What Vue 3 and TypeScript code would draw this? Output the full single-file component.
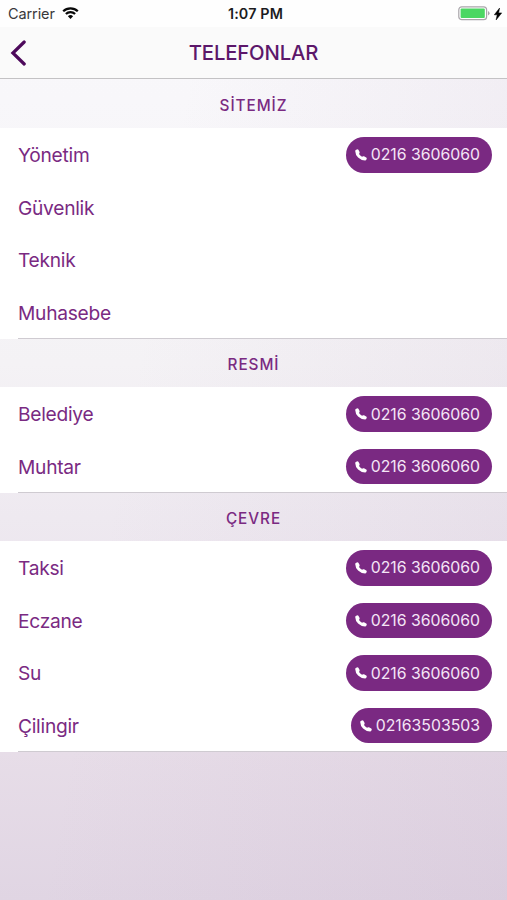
<script setup lang="ts">
interface Contact {
  name: string
  phone?: string
}

interface Section {
  title: string
  contacts: Contact[]
}

const sections: Section[] = [
  {
    title: 'SİTEMİZ',
    contacts: [
      { name: 'Yönetim', phone: '0216 3606060' },
      { name: 'Güvenlik' },
      { name: 'Teknik' },
      { name: 'Muhasebe' },
    ],
  },
  {
    title: 'RESMİ',
    contacts: [
      { name: 'Belediye', phone: '0216 3606060' },
      { name: 'Muhtar', phone: '0216 3606060' },
    ],
  },
  {
    title: 'ÇEVRE',
    contacts: [
      { name: 'Taksi', phone: '0216 3606060' },
      { name: 'Eczane', phone: '0216 3606060' },
      { name: 'Su', phone: '0216 3606060' },
      { name: 'Çilingir', phone: '02163503503' },
    ],
  },
]
</script>

<template>
  <div class="screen">
    <header class="top">
      <div class="status">
        <div class="status-left">
          <span class="carrier">Carrier</span>
          <svg class="wifi" viewBox="0 0 17 12" aria-hidden="true">
            <path d="M1.2 4.3 A10.4 10.4 0 0 1 15.8 4.3" />
            <path d="M3.9 7 A6.5 6.5 0 0 1 13.1 7" />
            <path class="dot" d="M8.5 11.9 L5.9 9.3 A3.7 3.7 0 0 1 11.1 9.3 Z" />
          </svg>
        </div>
        <span class="time">1:07 PM</span>
        <div class="status-right">
          <svg class="battery" viewBox="0 0 32 15" aria-hidden="true">
            <rect class="shell" x="0.8" y="0.8" width="27.8" height="12.9" rx="3" />
            <rect class="charge" x="2.6" y="2.6" width="24.2" height="9.3" rx="1" />
            <path class="cap" d="M30 5 Q31.6 5.7 31.6 7.2 Q31.6 8.8 30 9.5 Z" />
          </svg>
          <svg class="bolt" viewBox="0 0 8 12" aria-hidden="true">
            <path d="M5.6 0 L0.3 6.8 H3.2 L2.1 12 L7.7 4.9 H4.6 Z" />
          </svg>
        </div>
      </div>
      <nav class="nav">
        <button class="back" type="button" aria-label="Geri">
          <svg viewBox="0 0 16 26" aria-hidden="true">
            <path d="M14.2 2 L2.9 13 L14.2 24" />
          </svg>
        </button>
        <h1>TELEFONLAR</h1>
      </nav>
    </header>

    <section v-for="section in sections" :key="section.title">
      <h2>{{ section.title }}</h2>
      <ul>
        <li v-for="contact in section.contacts" :key="contact.name">
          <span class="name">{{ contact.name }}</span>
          <button v-if="contact.phone" class="call" type="button">
            <svg viewBox="0 0 12 12" aria-hidden="true">
              <path
                d="M0.8 0.9 L1.8 0.4 Q2.8 0 3.4 0.8 L4.5 2.8 Q4.9 3.6 4.4 4.3 L4 4.9 Q5.1 6.7 7 7.7 L7.6 7.4 Q8.3 7 9 7.3 L11.2 8.5 Q12 9 11.7 9.8 L11.3 10.7 Q10.9 11.5 10.1 11.5 Q6.1 11.4 3.1 8.5 Q0.3 5.6 0.2 1.9 Q0.2 1.2 0.8 0.9 Z"
              />
            </svg>
            <span>{{ contact.phone }}</span>
          </button>
        </li>
      </ul>
    </section>
  </div>
</template>

<style>
body {
  margin: 0;
}
</style>

<style scoped>
.screen {
  box-sizing: border-box;
  width: 100%;
  height: 900px;
  overflow: hidden;
  font-family: Inter, Roboto, sans-serif;
  color: #7a2a82;
  background:
    linear-gradient(100deg, rgba(190, 165, 195, 0) 30%, rgba(190, 165, 195, 0.16) 100%),
    linear-gradient(180deg, #f9f8fb 0, #f8f7fa 100px, #f4f2f5 364px, #eee9f0 517px, #e7dde8 752px, #e0d5e3 900px);
}

.top {
  box-sizing: border-box;
  height: 79px;
  background: #fafafa;
  border-bottom: 1px solid #c3c2c4;
}

.status {
  display: grid;
  grid-template-columns: 1fr auto 1fr;
  align-items: center;
  box-sizing: border-box;
  height: 27px;
  padding: 0 5px 0 8px;
  background: #fefefe;
  font-size: 14px;
}

.status-left,
.status-right {
  display: flex;
  align-items: center;
}

.status-right {
  justify-content: flex-end;
  gap: 4px;
}

.carrier {
  color: #38383a;
  font-size: 14.5px;
  letter-spacing: -0.1px;
}

.wifi {
  width: 17px;
  height: 12px;
  margin-left: 7px;
  margin-bottom: 1px;
  fill: none;
  stroke: #080808;
  stroke-width: 2.2;
}

.wifi .dot {
  fill: #080808;
  stroke: none;
}

.time {
  padding-left: 1px;
  color: #1c1c1e;
  font-size: 14.3px;
  font-weight: 600;
  letter-spacing: 0.15px;
}

.battery {
  width: 32px;
  height: 15px;
}

.shell {
  fill: #fff;
  stroke: #a9a5aa;
  stroke-width: 1.2;
}

.charge {
  fill: #4bd763;
}

.cap {
  fill: #a9a5aa;
}

.bolt {
  width: 8px;
  height: 12px;
  stroke: #000;
  stroke-width: 0.5;
  overflow: visible;
}

.nav {
  display: grid;
  grid-template-columns: 60px 1fr 60px;
  align-items: center;
  height: 51px;
}

.back {
  display: flex;
  padding: 0 0 0 10px;
  border: 0;
  background: none;
}

.back svg {
  width: 16px;
  height: 26px;
  fill: none;
  stroke: #4d095b;
  stroke-width: 3.2;
  stroke-linecap: round;
}

h1 {
  margin: 0;
  color: #5c176a;
  font-size: 20.3px;
  font-weight: 450;
  letter-spacing: -0.15px;
  line-height: 24px;
  text-align: center;
}

h2 {
  display: flex;
  align-items: center;
  justify-content: center;
  height: 48px;
  margin: 0;
  padding-top: 3px;
  box-sizing: border-box;
  font-size: 15.3px;
  font-weight: 500;
  letter-spacing: 0.95px;
}

section:first-of-type h2 {
  height: 49px;
}

ul {
  margin: 0;
  padding: 0;
  list-style: none;
  background: #fff;
}

li {
  display: flex;
  align-items: center;
  justify-content: space-between;
  box-sizing: border-box;
  height: 52.6px;
  padding: 1.4px 15px 0 18px;
}

li:last-child {
  height: 53.3px;
  padding-bottom: 0.7px;
  background: linear-gradient(#cfcbd1, #cfcbd1) 18px 100% / 100% 1px no-repeat;
}

.name {
  font-size: 19.2px;
  letter-spacing: -0.27px;
  line-height: 24px;
}

.call {
  display: flex;
  align-items: center;
  box-sizing: border-box;
  height: 35.4px;
  padding: 0 12px 0 9px;
  border: 0;
  border-radius: 18px;
  background: #7a2982;
  color: #f4e5f6;
  font-family: inherit;
  font-size: 15.8px;
}

.call svg {
  width: 12px;
  height: 12px;
  margin-right: 4px;
  fill: #fff;
}
</style>
